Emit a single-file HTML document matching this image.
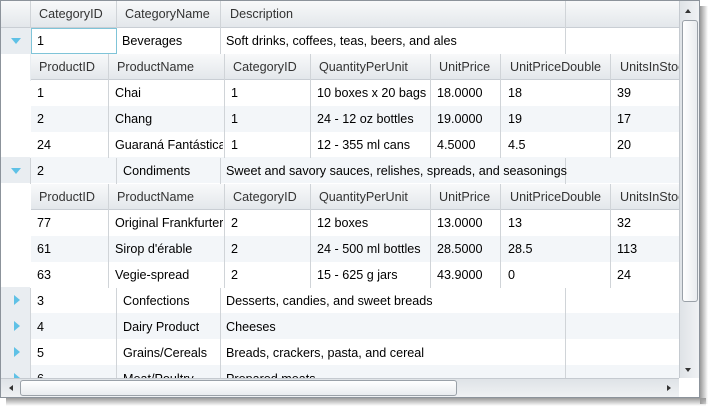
<!DOCTYPE html><html><head><style>
*{margin:0;padding:0;box-sizing:border-box}
body{width:720px;height:420px;background:#fff;font-family:"Liberation Sans",sans-serif;font-size:12.6px;color:#000;position:relative;overflow:hidden}
.a{position:absolute}
.t{position:absolute;white-space:nowrap;line-height:26px;height:26px;overflow:hidden}
.hd{background:linear-gradient(#f8f9fa,#e3e7eb);border-bottom:1px solid #c9ced4}
.vl{position:absolute;width:1px;background:#d0d4d8}
.hl{color:#333}
</style></head><body>
<div class="a" style="left:700px;top:6px;width:8px;height:398px;background:linear-gradient(90deg,#999,rgba(255,255,255,0))"></div>
<div class="a" style="left:6px;top:398px;width:700px;height:8px;background:linear-gradient(#999,rgba(255,255,255,0))"></div>
<div class="a" style="left:0;top:0;width:700px;height:398px;border:1px solid #8c939b;background:#fff;overflow:hidden">
<div class="a" style="left:0;top:0;width:678px;height:377px;overflow:hidden">
<div class="a hd" style="left:0;top:0;width:678px;height:27px"></div>
<div class="a" style="left:0;top:27px;width:29px;height:26px;background:#e9edf1"></div>
<div class="a" style="left:0;top:156px;width:29px;height:26px;background:#e9edf1"></div>
<div class="a" style="left:0;top:286px;width:29px;height:91px;background:#e9edf1"></div>
<div class="a" style="left:29px;top:156px;width:649px;height:26px;background:#f3f6f9"></div>
<div class="a" style="left:29px;top:312px;width:649px;height:26px;background:#f3f6f9"></div>
<div class="a" style="left:29px;top:364px;width:649px;height:26px;background:#f3f6f9"></div>
<div class="vl" style="left:29px;top:0;height:27px"></div>
<div class="vl" style="left:115px;top:0;height:53px"></div>
<div class="vl" style="left:219px;top:0;height:53px"></div>
<div class="vl" style="left:564px;top:0;height:53px"></div>
<div class="vl" style="left:29px;top:27px;height:53px;background:#e9edf1"></div>
<div class="t hl" style="left:38px;top:0">CategoryID</div>
<div class="t hl" style="left:124px;top:0">CategoryName</div>
<div class="t hl" style="left:229px;top:0">Description</div>
<div class="a" style="left:30px;top:27px;width:86px;height:26px;border:1px solid #7fc4d8"></div>
<div class="t" style="left:36px;top:27px">1</div>
<div class="t" style="left:121px;top:27px">Beverages</div>
<div class="t" style="left:225px;top:27px">Soft drinks, coffees, teas, beers, and ales</div>
<div class="a" style="left:10px;top:37px;border-left:5px solid transparent;border-right:5px solid transparent;border-top:6px solid #5fc1e6"></div>
<div class="a hd" style="left:30px;top:53px;width:648px;height:26px"></div>
<div class="a" style="left:30px;top:105px;width:648px;height:26px;background:#f3f6f9"></div>
<div class="vl" style="left:107px;top:53px;height:104px"></div>
<div class="vl" style="left:223px;top:53px;height:104px"></div>
<div class="vl" style="left:309px;top:53px;height:104px"></div>
<div class="vl" style="left:429px;top:53px;height:104px"></div>
<div class="vl" style="left:499px;top:53px;height:104px"></div>
<div class="vl" style="left:609px;top:53px;height:104px"></div>
<div class="t hl" style="left:38px;top:53px">ProductID</div><div class="t hl" style="left:116px;top:53px">ProductName</div><div class="t hl" style="left:232px;top:53px">CategoryID</div><div class="t hl" style="left:318px;top:53px">QuantityPerUnit</div><div class="t hl" style="left:438px;top:53px">UnitPrice</div><div class="t hl" style="left:509px;top:53px">UnitPriceDouble</div><div class="t hl" style="left:619px;top:53px">UnitsInStock</div>
<div class="t" style="left:36px;top:79px">1</div><div class="t" style="left:114px;top:79px">Chai</div><div class="t" style="left:230px;top:79px">1</div><div class="t" style="left:316px;top:79px">10 boxes x 20 bags</div><div class="t" style="left:436px;top:79px">18.0000</div><div class="t" style="left:507px;top:79px">18</div><div class="t" style="left:616px;top:79px">39</div>
<div class="t" style="left:36px;top:105px">2</div><div class="t" style="left:114px;top:105px">Chang</div><div class="t" style="left:230px;top:105px">1</div><div class="t" style="left:316px;top:105px">24 - 12 oz bottles</div><div class="t" style="left:436px;top:105px">19.0000</div><div class="t" style="left:507px;top:105px">19</div><div class="t" style="left:616px;top:105px">17</div>
<div class="t" style="left:36px;top:131px">24</div><div class="t" style="left:114px;top:131px;width:108px">Guaraná Fantástica</div><div class="t" style="left:230px;top:131px">1</div><div class="t" style="left:316px;top:131px">12 - 355 ml cans</div><div class="t" style="left:436px;top:131px">4.5000</div><div class="t" style="left:507px;top:131px">4.5</div><div class="t" style="left:616px;top:131px">20</div>
<div class="vl" style="left:29px;top:157px;height:26px"></div>
<div class="vl" style="left:115px;top:157px;height:26px"></div>
<div class="vl" style="left:219px;top:157px;height:26px"></div>
<div class="vl" style="left:564px;top:157px;height:26px"></div>
<div class="a" style="left:10px;top:167px;border-left:5px solid transparent;border-right:5px solid transparent;border-top:6px solid #5fc1e6"></div>
<div class="t" style="left:36px;top:157px">2</div><div class="t" style="left:122px;top:157px">Condiments</div><div class="t" style="left:225px;top:157px">Sweet and savory sauces, relishes, spreads, and seasonings</div>
<div class="a hd" style="left:30px;top:183px;width:648px;height:26px"></div>
<div class="a" style="left:30px;top:235px;width:648px;height:26px;background:#f3f6f9"></div>
<div class="vl" style="left:107px;top:183px;height:104px"></div>
<div class="vl" style="left:223px;top:183px;height:104px"></div>
<div class="vl" style="left:309px;top:183px;height:104px"></div>
<div class="vl" style="left:429px;top:183px;height:104px"></div>
<div class="vl" style="left:499px;top:183px;height:104px"></div>
<div class="vl" style="left:609px;top:183px;height:104px"></div>
<div class="t hl" style="left:38px;top:183px">ProductID</div><div class="t hl" style="left:116px;top:183px">ProductName</div><div class="t hl" style="left:232px;top:183px">CategoryID</div><div class="t hl" style="left:318px;top:183px">QuantityPerUnit</div><div class="t hl" style="left:438px;top:183px">UnitPrice</div><div class="t hl" style="left:509px;top:183px">UnitPriceDouble</div><div class="t hl" style="left:619px;top:183px">UnitsInStock</div>
<div class="t" style="left:36px;top:209px">77</div><div class="t" style="left:114px;top:209px;width:108px">Original Frankfurter</div><div class="t" style="left:230px;top:209px">2</div><div class="t" style="left:316px;top:209px">12 boxes</div><div class="t" style="left:436px;top:209px">13.0000</div><div class="t" style="left:507px;top:209px">13</div><div class="t" style="left:616px;top:209px">32</div>
<div class="t" style="left:36px;top:235px">61</div><div class="t" style="left:114px;top:235px">Sirop d'érable</div><div class="t" style="left:230px;top:235px">2</div><div class="t" style="left:316px;top:235px">24 - 500 ml bottles</div><div class="t" style="left:436px;top:235px">28.5000</div><div class="t" style="left:507px;top:235px">28.5</div><div class="t" style="left:616px;top:235px">113</div>
<div class="t" style="left:36px;top:261px">63</div><div class="t" style="left:114px;top:261px">Vegie-spread</div><div class="t" style="left:230px;top:261px">2</div><div class="t" style="left:316px;top:261px">15 - 625 g jars</div><div class="t" style="left:436px;top:261px">43.9000</div><div class="t" style="left:507px;top:261px">0</div><div class="t" style="left:616px;top:261px">24</div>
<div class="vl" style="left:29px;top:287px;height:90px"></div>
<div class="vl" style="left:115px;top:287px;height:90px"></div>
<div class="vl" style="left:219px;top:287px;height:90px"></div>
<div class="vl" style="left:564px;top:287px;height:90px"></div>
<div class="a" style="left:13px;top:294px;border-top:5px solid transparent;border-bottom:5px solid transparent;border-left:6px solid #5fc1e6"></div>
<div class="a" style="left:13px;top:320px;border-top:5px solid transparent;border-bottom:5px solid transparent;border-left:6px solid #5fc1e6"></div>
<div class="a" style="left:13px;top:346px;border-top:5px solid transparent;border-bottom:5px solid transparent;border-left:6px solid #5fc1e6"></div>
<div class="a" style="left:13px;top:372px;border-top:5px solid transparent;border-bottom:5px solid transparent;border-left:6px solid #5fc1e6"></div>
<div class="t" style="left:36px;top:287px">3</div><div class="t" style="left:122px;top:287px">Confections</div><div class="t" style="left:225px;top:287px">Desserts, candies, and sweet breads</div>
<div class="t" style="left:36px;top:313px">4</div><div class="t" style="left:122px;top:313px">Dairy Product</div><div class="t" style="left:225px;top:313px">Cheeses</div>
<div class="t" style="left:36px;top:339px">5</div><div class="t" style="left:122px;top:339px">Grains/Cereals</div><div class="t" style="left:225px;top:339px">Breads, crackers, pasta, and cereal</div>
<div class="t" style="left:36px;top:365px">6</div><div class="t" style="left:122px;top:365px">Meat/Poultry</div><div class="t" style="left:225px;top:365px">Prepared meats</div>
</div>
<div class="a" style="left:678px;top:0;width:20px;height:377px;background:linear-gradient(90deg,#dfe3e7,#f0f2f4);border-left:1px solid #c5cad0"></div>
<div class="a" style="left:684px;top:8px;border-left:3px solid transparent;border-right:3px solid transparent;border-bottom:4px solid #333"></div>
<div class="a" style="left:681px;top:19px;width:16px;height:282px;border:1px solid #9aa1a8;border-radius:3px;background:linear-gradient(90deg,#fff,#e9ecef)"></div>
<div class="a" style="left:684px;top:367px;border-left:3px solid transparent;border-right:3px solid transparent;border-top:4px solid #333"></div>
<div class="a" style="left:0;top:377px;width:678px;height:20px;background:linear-gradient(#dfe3e7,#f0f2f4);border-top:1px solid #c5cad0"></div>
<div class="a" style="left:8px;top:384px;border-top:3px solid transparent;border-bottom:3px solid transparent;border-right:4px solid #333"></div>
<div class="a" style="left:19px;top:379px;width:437px;height:16px;border:1px solid #9aa1a8;border-radius:3px;background:linear-gradient(#fff,#e9ecef)"></div>
<div class="a" style="left:666px;top:384px;border-top:3px solid transparent;border-bottom:3px solid transparent;border-left:4px solid #333"></div>
<div class="a" style="left:678px;top:377px;width:20px;height:20px;background:#fff"></div>
</div>
</body></html>
